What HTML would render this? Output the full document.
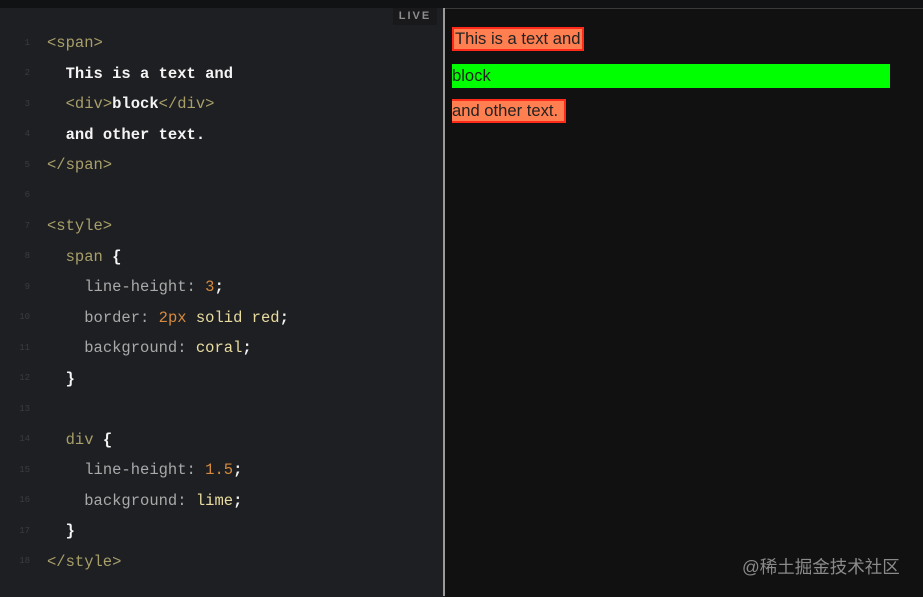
<!DOCTYPE html>
<html><head><style>
html,body{margin:0;padding:0;width:923px;height:596px;overflow:hidden;background:#1e1f22;}
.top{position:absolute;left:0;top:0;width:923px;height:8px;background:#111213;}
.ed{position:absolute;left:0;top:8px;width:444px;height:588px;background:#1e1f22;}
.ln{position:absolute;left:0;width:30px;text-align:right;font:9px "Liberation Mono",monospace;color:#3a3c40;}
.cd{position:absolute;left:47px;font:15.5px/20px "Liberation Mono",monospace;white-space:pre;color:#fff;}
.t{color:#a89f6a}.p{color:#a9a9a9}.n{color:#d58a3e}.k{color:#e8dca0}.w{color:#f4f4f4;font-weight:bold}
.live{position:absolute;left:393px;top:8px;width:44px;height:17px;background:#19191b;color:#8d8d8d;font:bold 11px "Liberation Sans",sans-serif;letter-spacing:2px;text-align:center;line-height:17px;}
.div{position:absolute;left:443px;top:8px;width:2px;height:588px;background:#9a9a9a;}
.pv{position:absolute;left:445px;top:8px;width:478px;height:588px;background:#111111;border-top:1px solid #3a3a3a;}
.b{position:absolute;font:16.6px/20px "Liberation Sans",sans-serif;color:#222;white-space:nowrap;overflow:hidden;}
.wm{position:absolute;left:742px;top:554px;font:17.5px "Liberation Sans","Noto Sans CJK SC",sans-serif;color:#8a8a8a;}
</style></head><body>
<div class="top"></div>
<div class="ed">
<div class="ln" style="top:30px">1</div><div class="ln" style="top:60px">2</div><div class="ln" style="top:91px">3</div><div class="ln" style="top:121px">4</div><div class="ln" style="top:152px">5</div><div class="ln" style="top:182px">6</div><div class="ln" style="top:213px">7</div><div class="ln" style="top:243px">8</div><div class="ln" style="top:274px">9</div><div class="ln" style="top:304px">10</div><div class="ln" style="top:335px">11</div><div class="ln" style="top:365px">12</div><div class="ln" style="top:396px">13</div><div class="ln" style="top:426px">14</div><div class="ln" style="top:457px">15</div><div class="ln" style="top:487px">16</div><div class="ln" style="top:518px">17</div><div class="ln" style="top:548px">18</div>
<div class="cd" style="top:25px"><span class="t">&lt;span&gt;</span></div>
<div class="cd" style="top:56px">  <span class="w">This is a text and</span></div>
<div class="cd" style="top:86px">  <span class="t">&lt;div&gt;</span><span class="w">block</span><span class="t">&lt;/div&gt;</span></div>
<div class="cd" style="top:117px">  <span class="w">and other text.</span></div>
<div class="cd" style="top:147px"><span class="t">&lt;/span&gt;</span></div>
<div class="cd" style="top:208px"><span class="t">&lt;style&gt;</span></div>
<div class="cd" style="top:239px">  <span class="t">span</span> <span class="w">{</span></div>
<div class="cd" style="top:269px">    <span class="p">line-height:</span> <span class="n">3</span><span class="w">;</span></div>
<div class="cd" style="top:300px">    <span class="p">border:</span> <span class="n">2px</span> <span class="k">solid red</span><span class="w">;</span></div>
<div class="cd" style="top:330px">    <span class="p">background:</span> <span class="k">coral</span><span class="w">;</span></div>
<div class="cd" style="top:361px">  <span class="w">}</span></div>
<div class="cd" style="top:422px">  <span class="t">div</span> <span class="w">{</span></div>
<div class="cd" style="top:452px">    <span class="p">line-height:</span> <span class="n">1.5</span><span class="w">;</span></div>
<div class="cd" style="top:483px">    <span class="p">background:</span> <span class="k">lime</span><span class="w">;</span></div>
<div class="cd" style="top:513px">  <span class="w">}</span></div>
<div class="cd" style="top:544px"><span class="t">&lt;/style&gt;</span></div>
</div>
<div class="live">LIVE</div>
<div class="pv"></div>
<div class="div"></div>
<div class="b" style="left:452px;top:27px;width:127px;height:20px;background:#ff7f50;border:2px solid #ff2a1a;padding-left:1px">This is a text and</div>
<div class="b" style="left:452px;top:64px;width:438px;height:24px;line-height:24px;background:#00ff00;">block</div>
<div class="b" style="left:452px;top:99px;width:112px;height:20px;background:#ff7f50;border:2px solid #ff2a1a;border-left:none">and other text.</div>
<div class="wm">@稀土掘金技术社区</div>
</body></html>
